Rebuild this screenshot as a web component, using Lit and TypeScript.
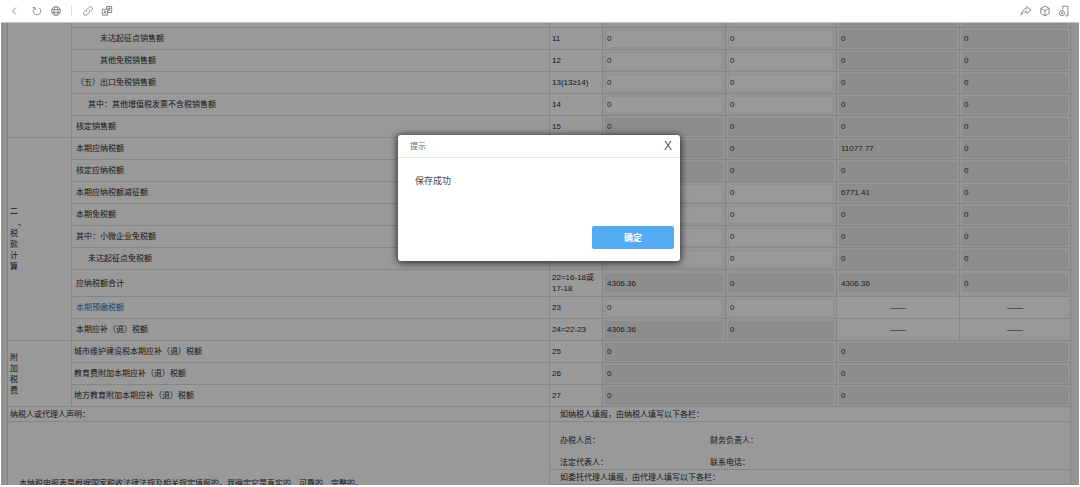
import { LitElement, html, css, svg, nothing } from "lit";
import { customElement, state } from "lit/decorators.js";

interface Row {
  label: string;
  no: string;
  indent?: string;
  link?: boolean;
  values: string[];
  /** one flag for each value: true when the box can be edited */
  open?: boolean[];
  group?: { text: string; span: number };
  tall?: boolean;
}

const zeros = ["0", "0", "0", "0"];
const blanks = ["", "", "", ""];
const half = [true, true, false, false];

const sales: Row[] = [
  { label: "", no: "", indent: "deep", values: blanks, open: half, group: { text: "", span: 6 } },
  { label: "未达起征点销售额", no: "11", indent: "deep", values: zeros, open: half },
  { label: "其他免税销售额", no: "12", indent: "deep", values: zeros, open: half },
  { label: "（五）出口免税销售额", no: "13(13≥14)", values: zeros, open: half },
  { label: "其中：其他增值税发票不含税销售额", no: "14", indent: "mid", values: zeros, open: half },
  { label: "核定销售额", no: "15", values: zeros },
];

const tax: Row[] = [
  { label: "本期应纳税额", no: "16", values: ["11077.77", "0", "11077.77", "0"], group: { text: "二\n　、\n税\n款\n计\n算", span: 9 } },
  { label: "核定应纳税额", no: "17", values: zeros },
  { label: "本期应纳税额减征额", no: "18", values: ["6771.41", "0", "6771.41", "0"], open: half },
  { label: "本期免税额", no: "19", values: zeros, open: half },
  { label: "其中：小微企业免税额", no: "20", values: zeros, open: half },
  { label: "未达起征点免税额", no: "21", indent: "mid", values: zeros, open: half },
  { label: "应纳税额合计", no: "22=16-18或17-18", values: ["4306.36", "0", "4306.36", "0"], tall: true },
  { label: "本期预缴税额", no: "23", link: true, values: ["0", "0", "-", "-"], open: half },
  { label: "本期应补（退）税额", no: "24=22-23", values: ["4306.36", "0", "-", "-"] },
];

const extra: Row[] = [
  { label: "城市维护建设税本期应补（退）税额", no: "25", indent: "flush", values: ["0", "0"], group: { text: "附\n加\n税\n费", span: 3 } },
  { label: "教育费附加本期应补（退）税额", no: "26", indent: "flush", values: ["0", "0"] },
  { label: "地方教育附加本期应补（退）税额", no: "27", indent: "flush", values: ["0", "0"] },
];

const icons = {
  back: svg`<path d="M8 2.500 4.500 6 8 9.500"/>`,
  reload: svg`<path d="M8.200 2.900a3.800 3.800 0 1 1-4.600.1"/><path d="M1.800 2.600h2.300v2.300"/>`,
  globe: svg`<circle cx="6" cy="6" r="4.400"/><ellipse cx="6" cy="6" rx="2" ry="4.400"/><path d="M1.800 4.600h8.400M1.800 7.400h8.400"/>`,
  link: svg`<path d="M5 7.200c-.9-.9-.8-2 0-2.800l2-2c.9-.9 2.100-.9 2.900-.1s.8 2-.1 2.900L8.600 6.400"/><path d="M7 4.800c.9.9.8 2 0 2.800l-2 2c-.9.900-2.100.9-2.900.1s-.8-2 .1-2.900l1.200-1.200"/>`,
  translate: svg`<rect x="1.300" y="4.300" width="5.200" height="5.800"/><path d="M5.500 4V1.500h5.200v6H6.800M2.800 8.600l1.100-3 1.100 3M3.200 7.600h1.400M6.800 3.300h2.800M8.200 2.400v1M9.400 3.500 7 6M7.200 4l2.400 2.200"/>`,
  share: svg`<path d="M6.800 1.600 11 5 6.800 8.400V6.600C4.200 6.500 2.400 7.600 1.200 10.200 1.300 6.300 3.400 3.800 6.800 3.500Z"/>`,
  cube: svg`<path d="M6 1.200 10.200 3.300v5.200L6 10.800 1.800 8.500V3.300ZM1.800 3.300 6 5.600l4.200-2.300M6 5.600v5.200"/>`,
  device: svg`<path d="M4.700 4.500V1.200h5.200v9.600H7.400"/><circle cx="4" cy="8.200" r="2.600"/><path d="M4 6.800v2.600M3 8.200h2"/>`,
};

@customElement("app-root")
export class AppRoot extends LitElement {
  @state() private dialogOpen = true;

  static styles = css`
    :host {
      display: flex;
      flex-direction: column;
      height: 100vh;
      box-sizing: border-box;
      padding: 0 1px 2px;
      overflow: hidden;
      background: #fff;
      color: #2a2a2a;
      font: 8px/11px "Liberation Sans", "Noto Sans CJK SC", sans-serif;
    }
    * { box-sizing: border-box; }
    .bar {
      display: flex;
      align-items: center;
      justify-content: space-between;
      flex: none;
      height: 23px;
      padding: 0 9px 1px 7px;
      border-bottom: 1px solid #c4c4c4;
    }
    .tools { display: flex; align-items: center; gap: 7px; }
    .tool {
      display: block;
      width: 12px;
      height: 12px;
      padding: 0;
      border: 0;
      background: none;
      color: #808080;
    }
    .tool svg {
      display: block;
      width: 12px;
      height: 12px;
      fill: none;
      stroke: currentColor;
      stroke-width: 0.9;
    }
    .spaced { margin-right: 4px; }
    .rule { width: 1px; height: 11px; margin: 0 3px 0 2px; background: #ddd; }
    .page {
      position: relative;
      flex: 1;
      min-height: 0;
      overflow: hidden;
      background: #f5f5f5;
      padding: 0 8px 0 6px;
    }
    .sheet {
      width: 100%;
      margin-top: -17px;
      table-layout: fixed;
      border-collapse: separate;
      border-spacing: 0;
      border-left: 1px solid #dfdfdf;
      background: #fff;
    }
    .c-group { width: 64px; }
    .c-no { width: 53px; }
    .c-wide { width: 123px; }
    .c-slim { width: 111px; }
    tr { height: 22px; }
    .tall { height: 27px; }
    .short { height: 15px; }
    td, th {
      padding: 0 2px;
      border: solid #dfdfdf;
      border-width: 0 1px 1px 0;
      text-align: left;
      font-weight: normal;
    }
    .group { white-space: pre; }
    .label { padding-left: 4px; }
    .flush { padding-left: 2px; }
    .mid { padding-left: 16px; }
    .deep { padding-left: 28px; }
    .label a { color: #2a76bd; text-decoration: none; }
    .field { padding: 0 2px; background: #f8f8f8; }
    .dash { text-align: center; }
    .field input {
      display: block;
      width: 100%;
      height: 18px;
      padding: 0 1px;
      border: 1px solid #f0f0f0;
      border-radius: 2px;
      background: #fff;
      color: #333;
      font: inherit;
    }
    .field input:read-only { background: #ebebeb; border-color: #e8e8e8; }
    .statement { height: 80px; padding: 56px 0 0 11px; vertical-align: top; }
    .note { padding-left: 10px; }
    .people { height: 48px; padding: 13px 0 0 10px; vertical-align: top; }
    .pairs { display: grid; grid-template-columns: 150px 1fr; row-gap: 11px; }
    .mask {
      position: absolute;
      inset: 0;
      display: flex;
      align-items: flex-start;
      justify-content: center;
      padding: 112px 2px 0 0;
      background: rgba(0, 0, 0, 0.4);
    }
    .dialog {
      width: 282px;
      border-radius: 3px;
      background: #fff;
      box-shadow: 0 1px 7px 1px rgba(0, 0, 0, 0.7);
    }
    .head {
      display: flex;
      align-items: center;
      justify-content: space-between;
      height: 23px;
      padding: 0 8px 0 12px;
      border-bottom: 1px solid #e4e4e4;
      color: #666;
    }
    .title { margin: 0; font: inherit; }
    .close {
      padding: 0;
      border: 0;
      background: none;
      color: #555;
      font: 12px/14px "Liberation Sans", sans-serif;
    }
    .message { margin: 0; padding: 17px; color: #444; font-size: 9px; line-height: 12px; }
    .actions { display: flex; justify-content: flex-end; padding: 22px 6px 12px; }
    .ok {
      width: 82px;
      height: 23px;
      padding: 0;
      border: 0;
      border-radius: 2px;
      background: #54abf4;
      color: #fff;
      font: bold 9px/12px "Liberation Sans", "Noto Sans CJK SC", sans-serif;
    }
  `;

  private tool(name: keyof typeof icons, label: string, extraClass = "") {
    return html`<button class="tool ${extraClass}" type="button" aria-label=${label}>
      <svg viewBox="0 0 12 12" aria-hidden="true">${icons[name]}</svg>
    </button>`;
  }

  private row(r: Row) {
    const span = r.values.length === 2 ? 2 : 1;
    return html`<tr class=${r.tall ? "tall" : ""}>
      ${r.group ? html`<th class="group" scope="rowgroup" rowspan=${r.group.span}>${r.group.text}</th>` : nothing}
      <th class="label ${r.indent ?? ""}" scope="row">${r.link ? html`<a href="#prepaid">${r.label}</a>` : r.label}</th>
      <td>${r.no}</td>
      ${r.values.map((v, i) =>
        v === "-"
          ? html`<td class="dash">——</td>`
          : html`<td class="field" colspan=${span}>
              <input type="text" aria-label="${r.label} ${i + 1}" .value=${v} ?readonly=${!r.open?.[i]} />
            </td>`
      )}
    </tr>`;
  }

  render() {
    const close = () => (this.dialogOpen = false);
    return html`
      <header class="bar">
        <div class="tools">
          ${this.tool("back", "返回", "spaced")} ${this.tool("reload", "刷新")} ${this.tool("globe", "网络")}
          <span class="rule"></span>
          ${this.tool("link", "链接")} ${this.tool("translate", "翻译")}
        </div>
        <div class="tools">
          ${this.tool("share", "分享")} ${this.tool("cube", "组件")} ${this.tool("device", "设备")}
        </div>
      </header>
      <main class="page">
        <table class="sheet">
          <colgroup>
            <col class="c-group" /><col /><col class="c-no" /><col class="c-wide" />
            <col class="c-slim" /><col class="c-wide" /><col class="c-slim" />
          </colgroup>
          <tbody>${sales.map((r) => this.row(r))}</tbody>
          <tbody>${tax.map((r) => this.row(r))}</tbody>
          <tbody>${extra.map((r) => this.row(r))}</tbody>
          <tbody>
            <tr class="short">
              <td colspan="2">纳税人或代理人声明：</td>
              <td class="note" colspan="5">如纳税人填报，由纳税人填写以下各栏：</td>
            </tr>
            <tr>
              <td class="statement" colspan="2" rowspan="3">本纳税申报表是根据国家税收法律法规及相关规定填报的，我确定它是真实的、可靠的、完整的。</td>
              <td class="people" colspan="5">
                <div class="pairs">
                  <span>办税人员：</span><span>财务负责人：</span>
                  <span>法定代表人：</span><span>联系电话：</span>
                </div>
              </td>
            </tr>
            <tr class="short"><td class="note" colspan="5">如委托代理人填报，由代理人填写以下各栏：</td></tr>
            <tr><td colspan="5"></td></tr>
          </tbody>
        </table>
        ${this.dialogOpen
          ? html`<div class="mask">
              <section class="dialog" role="dialog" aria-modal="true" aria-labelledby="dialog-title">
                <div class="head">
                  <h2 class="title" id="dialog-title">提示</h2>
                  <button class="close" type="button" aria-label="关闭" @click=${close}>X</button>
                </div>
                <p class="message">保存成功</p>
                <div class="actions"><button class="ok" type="button" @click=${close}>确定</button></div>
              </section>
            </div>`
          : nothing}
      </main>
    `;
  }
}
